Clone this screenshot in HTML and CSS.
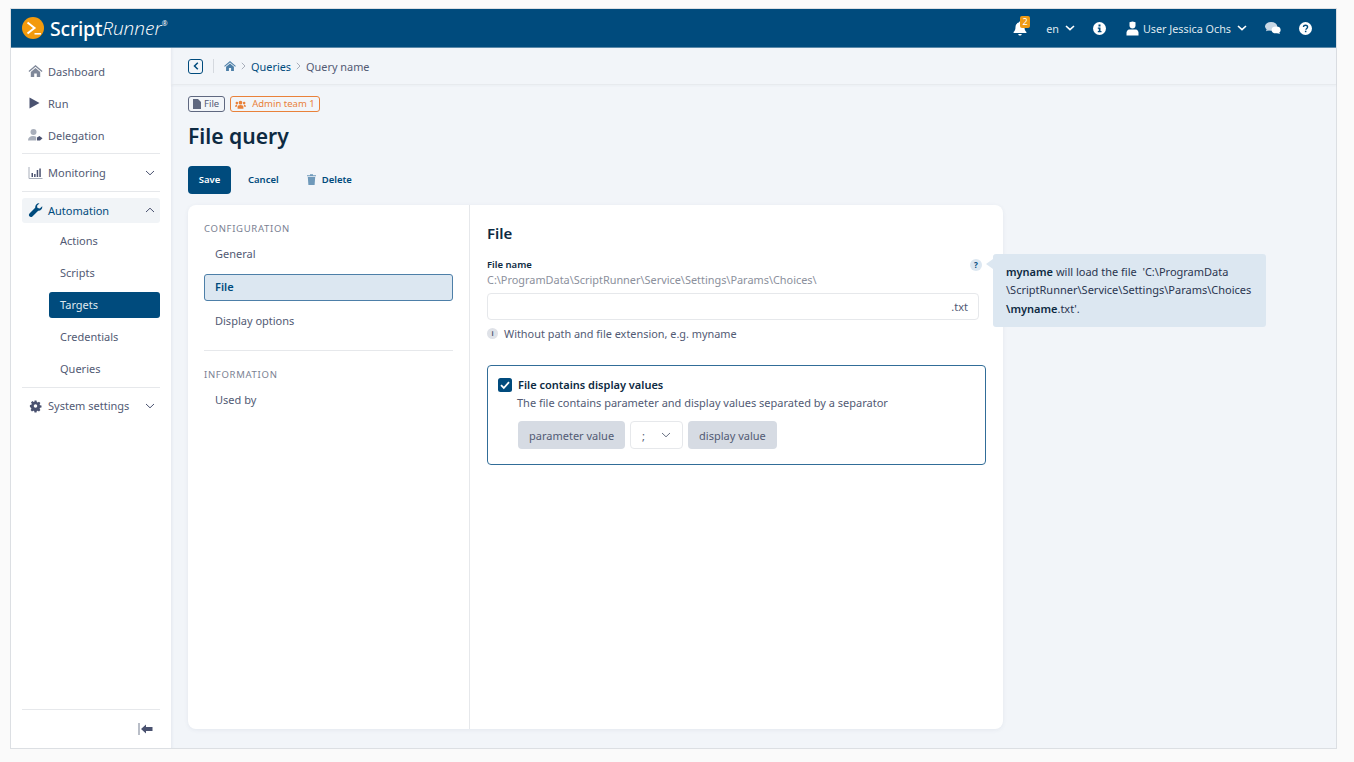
FILE: index.html
```html
<!DOCTYPE html>
<html>
<head>
<meta charset="utf-8">
<meta name="viewport" content="width=device-width,initial-scale=1.0">
<title>ScriptRunner - File query</title>
<link rel="stylesheet" href="styles.css">
</head>
<body>
<div class="app">
  <header class="topbar">
    <div class="logo">
      <svg class="logo-mark" width="22" height="22" viewBox="0 0 22 22"><circle cx="11" cy="11" r="11" fill="#f39a0c"/><path d="M5.500 5.500l7 5.500-7 5.500" fill="none" stroke="#fff" stroke-width="2"/><path d="M12.500 16.800h6.500" stroke="#fff" stroke-width="1.500"/></svg>
      <span class="logo-script">Script</span><span class="logo-runner">Runner</span><span class="logo-reg">®</span>
    </div>
    <div class="topbar-right">
      <span class="bell">
        <svg width="14" height="15" viewBox="0 0 14 15"><path d="M7 0.500c.7 0 1.100.5 1.100 1.100 2.200.5 3.400 2.200 3.400 4.400 0 3 .9 3.900 1.900 5v1H.6v-1c1-1.100 1.900-2 1.900-5 0-2.200 1.200-3.900 3.400-4.400C5.900 1 6.300.5 7 .5zM5.300 13h3.400c0 1-.8 1.600-1.700 1.600S5.300 14 5.300 13z" fill="#fff"/></svg>
        <span class="badge">2</span>
      </span>
      <span class="top-lang">en <svg class="chev" width="10" height="6" viewBox="0 0 10 6"><path d="M1 1l4 3.600L9 1" fill="none" stroke="#fff" stroke-width="1.600"/></svg></span>
      <svg class="top-info" width="13" height="13" viewBox="0 0 13 13"><circle cx="6.500" cy="6.500" r="6.500" fill="#fff"/><rect x="5.500" y="2.500" width="2" height="2" fill="#004b7d"/><path d="M4.800 5.500h2.700v3.600h1v1.200H4.800V9.100h1V6.700h-1z" fill="#004b7d"/></svg>
      <span class="top-user">
        <svg width="13" height="15" viewBox="0 0 13 15"><path d="M3.500 1.200L6.500 .5l3 .7v3.300c0 1.700-1.300 3-3 3s-3-1.300-3-3z" fill="#fff"/><path d="M2.800 8.500h7.400c1.300.4 2.300 1.700 2.300 3.300v2.700H.5v-2.700c0-1.600 1-2.900 2.300-3.300z" fill="#fff"/></svg>
        <span>User Jessica Ochs</span>
        <svg class="chev" width="10" height="6" viewBox="0 0 10 6"><path d="M1 1l4 3.600L9 1" fill="none" stroke="#fff" stroke-width="1.600"/></svg>
      </span>
      <svg class="top-chat" width="16" height="14" viewBox="0 0 17 14"><ellipse cx="6.500" cy="5.200" rx="6.500" ry="4.700" fill="#c9d8e5"/><path d="M2 8l-1 2.500L5 9z" fill="#c9d8e5"/><ellipse cx="11.800" cy="9" rx="4.800" ry="3.600" fill="#fff"/><path d="M14.500 11l1.500 2.500-4-1.500z" fill="#fff"/></svg>
      <svg class="top-help" width="13" height="13" viewBox="0 0 13 13"><circle cx="6.500" cy="6.500" r="6.500" fill="#fff"/><path d="M4.400 5c.1-1.200 1-1.800 2.100-1.800 1.200 0 2.100.7 2.100 1.800 0 1.500-1.700 1.400-1.700 2.800" fill="none" stroke="#004b7d" stroke-width="1.400"/><rect x="5.900" y="8.700" width="1.500" height="1.500" fill="#004b7d"/></svg>
    </div>
  </header>

  <div class="main">
    <nav class="sidebar">
      <div class="nav-group nav-top">
        <a class="nav-item">
          <svg class="nav-icon" width="14" height="12" viewBox="0 0 14 12"><path d="M7 0l7 6-.8.900L7 1.800.8 6.900 0 6z" fill="#7f8899"/><path d="M2.300 7L7 3l4.700 4v5H8.300V8.500H5.700V12H2.300z" fill="#7f8899"/></svg>
          Dashboard
        </a>
        <a class="nav-item">
          <svg class="nav-icon" width="14" height="12" viewBox="0 0 14 12"><path d="M1 .5l10 5.500-10 5.500z" fill="#4a5270"/></svg>
          Run
        </a>
        <a class="nav-item">
          <svg class="nav-icon" width="15" height="12" viewBox="0 0 15 12"><circle cx="5.500" cy="3" r="3" fill="#a9afbb"/><path d="M0 11.500c0-3 2-4.500 5-4.500 1.300 0 2.400.3 3.200.8v3.700z" fill="#a9afbb"/><path d="M9 8.500l2.500-1.500 3 2.300-2.500 2.200H9z" fill="#4a5270"/></svg>
          Delegation
        </a>
      </div>
      <div class="nav-group">
        <a class="nav-item nav-head">
          <svg class="nav-icon" width="14" height="12" viewBox="0 0 14 12"><path d="M.5 0v11.500H14" fill="none" stroke="#a9afbb" stroke-width="1"/><path d="M3 6h1.500v4H3zM5.600 7h1.500v3H5.600zM8.200 3h1.500v7H8.200zM10.800 1.500h1.500V10h-1.500z" fill="#4a5270"/></svg>
          Monitoring
          <svg class="nav-chev" width="10" height="6" viewBox="0 0 10 6"><path d="M1 1l4 3.800L9 1" fill="none" stroke="#4a5270" stroke-width="1"/></svg>
        </a>
      </div>
      <div class="nav-group">
        <a class="nav-item nav-head nav-open">
          <svg class="nav-icon" width="14" height="14" viewBox="0 0 14 14"><path d="M13.700 3.200c.5 2.300-1.300 4.700-4 4.500L3.900 13.400c-.8.800-2.300.8-3-.1-.7-.8-.7-2 .1-2.800l5.700-5.700C6.400 2 8.700-.3 11 .2L8.500 2.700l.5 2.300 2.300.6z" fill="#004b7d"/></svg>
          Automation
          <svg class="nav-chev" width="10" height="6" viewBox="0 0 10 6"><path d="M1 5l4-3.800L9 5" fill="none" stroke="#4a5270" stroke-width="1"/></svg>
        </a>
        <a class="nav-sub">Actions</a>
        <a class="nav-sub">Scripts</a>
        <a class="nav-sub nav-active">Targets</a>
        <a class="nav-sub">Credentials</a>
        <a class="nav-sub">Queries</a>
      </div>
      <div class="nav-group nav-last">
        <a class="nav-item nav-head">
          <svg class="nav-icon" width="14" height="14" viewBox="-2 -2 18 18"><path fill-rule="evenodd" d="M5.700 0h2.600l.4 1.900 1.100.5 1.700-1 1.800 1.800-1 1.700.5 1.100 1.900.4v2.600l-1.900.4-.5 1.100 1 1.700-1.800 1.800-1.700-1-1.100.5-.4 1.900H5.700l-.4-1.900-1.100-.5-1.700 1-1.800-1.800 1-1.700-.5-1.100L-.2 8.300V5.700l1.900-.4.5-1.100-1-1.700L3 .7l1.700 1 1.100-.5zM7 4.700a2.300 2.300 0 100 4.600 2.300 2.300 0 000-4.600z" fill="#4a5270"/></svg>
          System settings
          <svg class="nav-chev" width="10" height="6" viewBox="0 0 10 6"><path d="M1 1l4 3.800L9 1" fill="none" stroke="#4a5270" stroke-width="1"/></svg>
        </a>
      </div>
      <div class="nav-foot">
        <svg width="15" height="12" viewBox="0 0 15 12"><rect x="0" y="0" width="2" height="12" fill="#b9bec8"/><path d="M3 6l5-4.500V4h6.500v4H8v2.500z" fill="#4a5270"/></svg>
      </div>
    </nav>

    <div class="content">
      <div class="crumbs">
        <span class="back"><svg width="6" height="8" viewBox="0 0 6 8"><path d="M4.800 .8L1.500 4l3.300 3.200" fill="none" stroke="#004b7d" stroke-width="1.500"/></svg></span>
        <span class="crumb-sep"></span>
        <svg width="12" height="10" viewBox="0 0 14 12"><path d="M7 0l7 6-.8.900L7 1.800.8 6.900 0 6z" fill="#4d7fa8"/><path d="M2.300 7L7 3l4.700 4v5H8.300V8.500H5.700V12H2.300z" fill="#4d7fa8"/></svg>
        <svg class="crumb-arrow" width="5" height="8" viewBox="0 0 5 8"><path d="M.8 .8L4 4 .8 7.200" fill="none" stroke="#a9afbb" stroke-width="1"/></svg>
        <a class="crumb-link">Queries</a>
        <svg class="crumb-arrow" width="5" height="8" viewBox="0 0 5 8"><path d="M.8 .8L4 4 .8 7.200" fill="none" stroke="#a9afbb" stroke-width="1"/></svg>
        <span class="crumb-now">Query name</span>
      </div>

      <div class="page">
        <div class="tags">
          <span class="tag tag-file">
            <svg width="8" height="10" viewBox="0 0 8 10"><path d="M0 0h5l3 3v7H0z" fill="#5f6880"/></svg>
            File
          </span>
          <span class="tag tag-team">
            <svg width="11" height="9" viewBox="0 0 12 9"><circle cx="6" cy="2.500" r="2" fill="#e9813a"/><circle cx="2" cy="2.800" r="1.400" fill="#e9813a"/><circle cx="10" cy="2.800" r="1.400" fill="#e9813a"/><path d="M2.800 9V7c0-1.200 1.200-2 3.200-2s3.200.8 3.200 2v2zM0 7c0-1.300.8-2.500 2.500-2.500L2 7zM12 7c0-1.300-.8-2.500-2.500-2.500L10 7z" fill="#e9813a"/></svg>
            Admin team 1
          </span>
        </div>
        <h1 class="page-title">File query</h1>
        <div class="actions">
          <button class="btn btn-save">Save</button>
          <button class="btn btn-plain">Cancel</button>
          <button class="btn btn-plain btn-delete">
            <svg width="9" height="11" viewBox="0 0 9 11"><path d="M0 1.300h3V.3h3v1h3v1H0zM.8 3h7.400l-.6 8H1.400z" fill="#6f99ba"/></svg>
            Delete
          </button>
        </div>

        <div class="card-row">
          <section class="card">
            <aside class="card-menu">
              <div class="menu-head">CONFIGURATION</div>
              <a class="menu-item">General</a>
              <a class="menu-item menu-active">File</a>
              <a class="menu-item">Display options</a>
              <div class="menu-rule"></div>
              <div class="menu-head">INFORMATION</div>
              <a class="menu-item">Used by</a>
            </aside>
            <div class="card-body">
              <h2 class="card-title">File</h2>
              <div class="field-label">
                <span>File name</span>
                <span class="help-dot">?</span>
              </div>
              <div class="field-path">C:\ProgramData\ScriptRunner\Service\Settings\Params\Choices\</div>
              <div class="input">.txt</div>
              <div class="hint">
                <span class="hint-dot">i</span>
                Without path and file extension, e.g. myname
              </div>
              <div class="box">
                <div class="check-row">
                  <svg width="14" height="14" viewBox="0 0 14 14"><rect width="14" height="14" rx="2.500" fill="#004b7d"/><path d="M3 7.200l2.800 2.800L11 4.200" fill="none" stroke="#fff" stroke-width="1.800"/></svg>
                  File contains display values
                </div>
                <div class="box-desc">The file contains parameter and display values separated by a separator</div>
                <div class="sep-row">
                  <span class="pill">parameter value</span>
                  <span class="select">;<svg width="10" height="6" viewBox="0 0 10 6"><path d="M1 1l4 3.800L9 1" fill="none" stroke="#6b7385" stroke-width="1"/></svg></span>
                  <span class="pill">display value</span>
                </div>
              </div>
            </div>
          </section>
          <div class="tip">
            <b>myname</b> will load the file &nbsp;'C:\ProgramData<br>\ScriptRunner\Service\Settings\Params\Choices<br><b>\myname</b>.txt'.
          </div>
        </div>
      </div>
    </div>
  </div>
</div>
</body>
</html>
```

FILE: styles.css
```css
* {
  box-sizing: border-box;
}
html, body {
  margin: 0;
  padding: 0;
  height: 100%;
}
body {
  background-color: #fafafa;
  font-family: "Noto Sans", "Open Sans", sans-serif;
  font-size: 11px;
  color: #525a74;
  overflow: hidden;
}
a {
  cursor: pointer;
}
.app {
  display: flex;
  flex-direction: column;
  width: 1327px;
  height: 741px;
  margin: 8px 0 0 10px;
  border: 1px solid #dcdfe3;
}

/* top bar */
.topbar {
  display: flex;
  align-items: center;
  justify-content: space-between;
  flex: none;
  height: 39px;
  padding: 0 24px 0 11px;
  background-color: #004b7d;
  border-bottom: 1px solid #5c8aaa;
  color: #dfe8ef;
}
.logo {
  display: flex;
  align-items: center;
  color: #fff;
}
.logo-mark {
  margin-right: 6px;
}
.logo-script {
  font-size: 19.500px;
  font-weight: 500;
  letter-spacing: -.2px;
}
.logo-runner {
  font-family: "Open Sans", sans-serif;
  font-size: 19px;
  font-style: italic;
  font-weight: 300;
}
.logo-reg {
  align-self: flex-start;
  font-size: 7px;
  margin: 4px 0 0 0;
}
.topbar-right {
  display: flex;
  align-items: center;
  font-size: 10.800px;
}
.bell {
  position: relative;
  display: flex;
  margin-right: 19px;
}
.badge {
  position: absolute;
  top: -5px;
  left: 7px;
  width: 10px;
  height: 12px;
  border-radius: 2px;
  background-color: #ef9a13;
  color: #fff;
  font-size: 9px;
  line-height: 12px;
  text-align: center;
}
.top-lang {
  display: flex;
  align-items: center;
  margin-right: 18px;
}
.top-lang .chev {
  margin-left: 6px;
}
.top-info {
  margin-right: 20px;
}
.top-user {
  display: flex;
  align-items: center;
  gap: 4px;
  margin-right: 18px;
}
.top-user .chev {
  margin-left: 2px;
}
.top-chat {
  margin-right: 18px;
}

/* sidebar */
.main {
  display: flex;
  flex: 1;
  min-height: 0;
}
.sidebar {
  display: flex;
  flex-direction: column;
  flex: none;
  width: 160px;
  padding: 7px 11px 0;
  background-color: #fff;
}
.nav-group {
  padding-bottom: 6px;
  margin-bottom: 5px;
  border-bottom: 1px solid #e6e8eb;
}
.nav-top {
  padding-bottom: 2px;
}
.nav-group:nth-child(3) {
  padding-bottom: 5px;
}
.nav-last {
  margin-bottom: 0;
  border-bottom: 0;
}
.nav-item {
  display: flex;
  align-items: center;
  height: 32px;
  padding-left: 6px;
  line-height: 1;
}
.nav-head {
  height: 25px;
  margin-top: 1px;
}
.nav-open {
  padding-bottom: 1px;
}
.nav-last .nav-head {
  margin-top: 0;
}
.nav-icon {
  flex: none;
  width: 15px;
  margin-right: 5px;
}
.nav-chev {
  margin-left: auto;
  margin-right: 5px;
}
.nav-open {
  background-color: #f1f4f7;
  border-radius: 3px;
  color: #004b7d;
}
.nav-sub {
  display: flex;
  align-items: center;
  height: 26px;
  margin: 6px 0 0 27px;
  padding: 0 0 1px 11px;
  border-radius: 3px;
}
.nav-open + .nav-sub {
  margin-top: 5px;
}
.nav-active {
  background-color: #004b7d;
  color: #dfe8ef;
}
.nav-foot {
  display: flex;
  justify-content: flex-end;
  align-items: center;
  height: 39px;
  margin-top: auto;
  padding-right: 7px;
  border-top: 1px solid #e6e8eb;
}

/* content */
.content {
  display: flex;
  flex-direction: column;
  flex: 1;
  min-width: 0;
  background-color: #f2f5f9;
  box-shadow: inset 3px 0 3px -2px rgba(60, 80, 110, .08);
}
.crumbs {
  display: flex;
  align-items: center;
  flex: none;
  height: 37px;
  padding: 0 17px;
  border-bottom: 1px solid #e7eaee;
  box-shadow: 0 1px 2px rgba(60, 80, 110, .04);
  font-size: 10.900px;
}
.back {
  display: flex;
  align-items: center;
  justify-content: center;
  width: 15px;
  height: 15px;
  border: 1px solid #004b7d;
  border-radius: 3px;
}
.crumb-sep {
  width: 1px;
  height: 14px;
  margin: 0 10px;
  background-color: #d5d9df;
}
.crumb-arrow {
  margin: 0 5px;
}
.crumb-link {
  color: #004b7d;
}
.page {
  display: flex;
  flex-direction: column;
  flex: 1;
  min-height: 0;
  padding: 11px 17px 19px;
}
.tags {
  display: flex;
  gap: 5px;
}
.tag {
  display: flex;
  align-items: center;
  gap: 3px;
  height: 16px;
  padding: 0 5px 0 4px;
  border: 1px solid #5f6880;
  border-radius: 3px;
  font-size: 9.500px;
  line-height: 1;
}
.tag-team {
  gap: 6px;
  padding: 0 4px;
  border-color: #e9813a;
  color: #e9813a;
}
.page-title {
  margin: 8px 0 16px;
  font-size: 21.100px;
  font-weight: 600;
  line-height: 31px;
  color: #0d2a42;
}
.actions {
  display: flex;
  align-items: center;
  gap: 6px;
  margin: -1px 0 11px;
}
.btn {
  display: flex;
  align-items: center;
  height: 28px;
  padding: 0 11px 1px;
  border: 0;
  border-radius: 4px;
  background: none;
  font-family: inherit;
  font-size: 9.500px;
  font-weight: 600;
  color: #004b7d;
}
.btn-save {
  justify-content: center;
  width: 43px;
  padding: 0 0 1px;
  background-color: #004b7d;
  color: #fff;
}
.btn-delete {
  gap: 6px;
}

/* card */
.card-row {
  display: flex;
  align-items: flex-start;
  flex: 1;
  min-height: 0;
}
.card {
  display: flex;
  flex: none;
  width: 815px;
  height: 100%;
  border-radius: 8px;
  background-color: #fff;
  box-shadow: 0 1px 4px rgba(60, 80, 110, .08);
}
.card-menu {
  flex: none;
  width: 282px;
  padding: 17px 16px 0;
  border-right: 1px solid #e6e8eb;
}
.menu-head {
  margin-bottom: 5px;
  font-size: 9.500px;
  letter-spacing: .7px;
  line-height: 13px;
  color: #7a8192;
}
.menu-item {
  display: flex;
  align-items: center;
  height: 27px;
  margin-bottom: 6.500px;
  padding-left: 11px;
  line-height: 1;
}
.menu-active {
  background-color: #dce7f1;
  border: 1px solid #4d7fa8;
  border-radius: 3px;
  padding: 0 0 1px 10px;
  font-weight: 600;
  color: #004b7d;
}
.menu-rule {
  height: 1px;
  margin: 15.500px 0 17px;
  background-color: #e6e8eb;
}
.card-body {
  flex: 1;
  min-width: 0;
  padding: 17px 17px 0;
}
.card-title {
  margin: 0 0 13px;
  font-size: 15px;
  font-weight: 600;
  line-height: 22px;
  color: #0d2a42;
}
.field-label {
  display: flex;
  align-items: center;
  justify-content: space-between;
  height: 14px;
  padding-right: 4px;
  font-size: 9.500px;
  font-weight: 600;
  color: #0d2a42;
}
.help-dot {
  width: 12px;
  height: 12px;
  margin-top: 1px;
  border-radius: 50%;
  background-color: #dce7f1;
  font-size: 8px;
  font-weight: 700;
  line-height: 12px;
  text-align: center;
  color: #004b7d;
}
.field-path {
  margin-top: 1px;
  font-size: 10.900px;
  line-height: 15px;
  color: #8b909c;
}
.input {
  height: 27px;
  margin: 6px 7px 0 0;
  padding-right: 10px;
  border: 1px solid #e6e8eb;
  border-radius: 4px;
  line-height: 25px;
  text-align: right;
}
.hint {
  display: flex;
  align-items: center;
  gap: 6px;
  margin-top: 6px;
  font-size: 10.900px;
  line-height: 15px;
}
.hint-dot {
  width: 11px;
  height: 11px;
  border-radius: 50%;
  background-color: #dfe2e8;
  font-size: 7px;
  font-weight: 700;
  line-height: 11px;
  text-align: center;
}
.box {
  height: 100px;
  margin-top: 24px;
  padding: 11px 10px 0;
  border: 1px solid #316d98;
  border-radius: 4px;
}
.check-row {
  display: flex;
  align-items: center;
  gap: 6px;
  font-weight: 600;
  line-height: 15px;
  color: #0d2a42;
}
.box-desc {
  margin: 3px 0 11px 19px;
  line-height: 15px;
}
.sep-row {
  display: flex;
  gap: 5px;
  margin-left: 20px;
}
.pill {
  display: flex;
  align-items: center;
  height: 28px;
  padding: 0 11px;
  border-radius: 4px;
  background-color: #d6dbe3;
}
.select {
  display: flex;
  align-items: center;
  justify-content: space-between;
  width: 53px;
  height: 28px;
  padding: 0 11px;
  border: 1px solid #e6e8eb;
  border-radius: 4px;
}

/* tooltip */
.tip {
  position: relative;
  flex: none;
  width: 273px;
  height: 73px;
  margin: 49px 0 0 -10px;
  padding: 9px 13px;
  border-radius: 3px;
  background-color: #dce7f1;
  line-height: 18.300px;
  color: #2a3550;
}
.tip::before {
  content: "";
  position: absolute;
  left: -7px;
  top: 5px;
  border-style: solid;
  border-width: 5px 7px 5px 0;
  border-color: transparent #dce7f1 transparent transparent;
}
.tip b {
  font-weight: 600;
  color: #0d2a42;
}
```
